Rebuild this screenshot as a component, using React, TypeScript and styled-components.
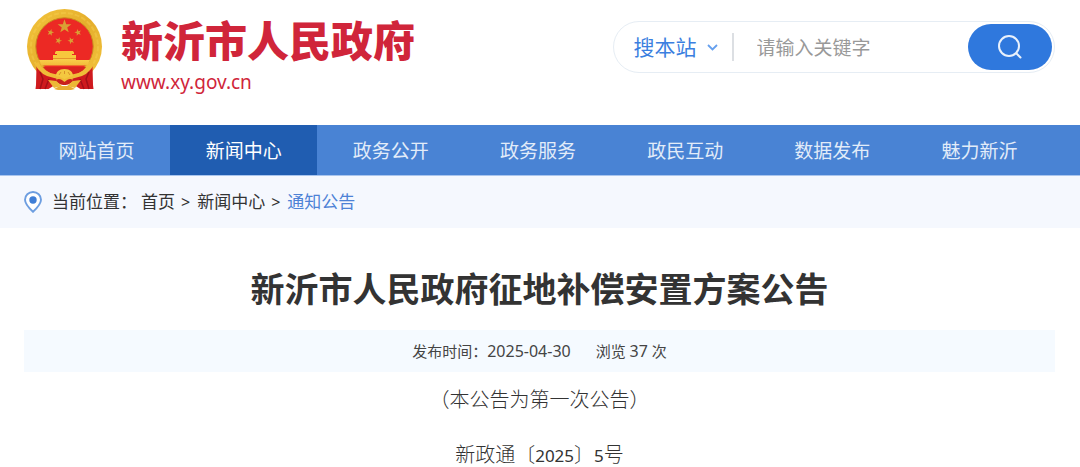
import React from 'react';
import styled, { createGlobalStyle } from 'styled-components';

const GlobalStyle = createGlobalStyle`
  *, *::before, *::after { box-sizing: border-box; }
  body {
    margin: 0;
    background: #fff;
    color: #333;
    font-family: "Noto Sans", "Noto Sans CJK SC", sans-serif;
  }
  button, input, select { font: inherit; }
  h1, p, ul, ol { margin: 0; padding: 0; }
  li { list-style: none; }
  a { color: inherit; text-decoration: none; }
`;

const Header = styled.header`
  display: flex;
  align-items: flex-start;
  justify-content: space-between;
  padding: 9px 25px 34px 26px;
`;

const Brand = styled.a`
  display: flex;
  gap: 18px;
  color: #d0253a;
`;

const BrandText = styled.span`
  display: flex;
  flex-direction: column;
  gap: 8px;
  padding-top: 4px;
`;

const SiteName = styled.strong`
  font-family: "Noto Sans CJK SC", sans-serif;
  font-size: 42px;
  font-weight: 900;
  line-height: 52px;
`;

const SiteUrl = styled.span`
  font-size: 19px;
  line-height: 18px;
`;

const SearchForm = styled.form`
  display: flex;
  align-items: center;
  width: 43%;
  margin-top: 12px;
  padding: 2px 2px 2px 20px;
  border: 1px solid #e6edf4;
  border-radius: 27px;
`;

const ScopeLabel = styled.label`
  display: flex;
  align-items: center;
  gap: 10px;
  padding-right: 14px;
  border-right: 2px solid #dcdfe3;
  color: #3b7fe0;
`;

const ScopeSelect = styled.select`
  appearance: none;
  padding: 0;
  border: 0;
  background: none;
  color: inherit;
  font-size: 21px;
  line-height: 28px;
`;

const KeywordInput = styled.input`
  flex: 1;
  min-width: 0;
  padding: 2px 23px 0;
  border: 0;
  outline: 0;
  background: none;
  font-size: 19px;
  line-height: 28px;
  &::placeholder { color: #999; opacity: 1; }
`;

const SearchButton = styled.button`
  display: flex;
  align-items: center;
  justify-content: center;
  padding: 10px 29px;
  border: 0;
  border-radius: 24px;
  background: #2f78dd;
  color: #e9f1fc;
`;

const Nav = styled.nav`
  padding: 0 27px 0 23px;
  border-bottom: 1px solid #a9c5ee;
  background: #4983d4;
`;

const NavList = styled.ul`
  display: flex;
`;

const NavItem = styled.li`
  flex: 1;
`;

const NavLink = styled.a<{ $active?: boolean }>`
  display: block;
  padding-top: 2px;
  background: ${p => (p.$active ? '#205db1' : 'transparent')};
  color: ${p => (p.$active ? '#fff' : '#e2ecf9')};
  font-size: 19px;
  line-height: 48px;
  text-align: center;
`;

const Breadcrumb = styled.nav`
  display: flex;
  align-items: center;
  padding: 0 24px;
  background: #f5f8fe;
  font-size: 17px;
  line-height: 52px;
`;

const CrumbLabel = styled.span`
  margin: 0 4px 0 10px;
`;

const CrumbList = styled.ol`
  display: flex;
`;

const Crumb = styled.li`
  & + &::before {
    content: ">";
    margin: 0 7px 0 6px;
    font-size: 16px;
  }
`;

const CurrentLink = styled.a`
  color: #4d82d6;
`;

const Article = styled.main`
  padding: 36px 25px 0 24px;
  text-align: center;
`;

const Title = styled.h1`
  font-size: 34px;
  font-weight: 700;
  line-height: 50px;
`;

const Meta = styled.div`
  display: flex;
  justify-content: center;
  gap: 25px;
  margin-top: 16px;
  background: #f5faff;
  color: #444;
  font-size: 15px;
  line-height: 42px;
`;

const Paragraph = styled.p`
  color: #333;
  font-size: 20px;
  font-weight: 300;
  line-height: 55px;
`;

const Figure = styled.span`
  font-size: 16px;
`;

const DocNumber = styled.span`
  font-size: 17px;
  font-weight: 400;
`;

const star = (cx: number, cy: number, r: number, turn = 0) =>
  Array.from({ length: 10 }, (_, i) => {
    const a = ((i * 36 - 90 + turn) * Math.PI) / 180;
    const d = i % 2 ? r * 0.4 : r;
    return `${(cx + d * Math.cos(a)).toFixed(2)},${(cy + d * Math.sin(a)).toFixed(2)}`;
  }).join(' ');

const Emblem = () => (
  <svg width="77" height="82" viewBox="0 0 77 82" aria-hidden="true">
    <defs>
      <linearGradient id="gold" x1="0" y1="0" x2="1" y2="1">
        <stop offset="0" stopColor="#f3c53c" />
        <stop offset=".5" stopColor="#e5ae2c" />
        <stop offset="1" stopColor="#f4c63e" />
      </linearGradient>
      <linearGradient id="terrace" x1="0" y1="0" x2="0" y2="1">
        <stop offset="0" stopColor="#f9d04a" />
        <stop offset="1" stopColor="#f2b93a" />
      </linearGradient>
    </defs>
    <circle cx="38.5" cy="37.5" r="37.5" fill="url(#gold)" />
    <circle cx="38.5" cy="37.5" r="33.5" fill="none" stroke="#f7d253" strokeWidth="2" strokeDasharray="5 2" opacity=".4" />
    <circle cx="38.5" cy="37.5" r="28.7" fill="#ec2924" stroke="#c98a1e" strokeWidth="1" />
    <g fill="#d9a034">
      <polygon points={star(38.5, 17.5, 7.2)} />
      <polygon points={star(24.5, 23.5, 3.6, 15)} />
      <polygon points={star(52, 23.5, 3.6, -15)} />
      <polygon points={star(32.5, 31.7, 3.6, 20)} />
      <polygon points={star(45, 31.7, 3.6, -20)} />
    </g>
    <path d="M29 43.500l1-1.500h17l1 1.500v1.500h-2v1h4v3H27v-3h4v-1h-2z" fill="#f7c83d" />
    <path d="M27 49h23v2H27z" fill="#e5962b" />
    <path d="M13 51h14v-1h23v1h14l-2.500 5.500h-46z" fill="url(#terrace)" />
    <path d="M17 58h43c-4 6-12 9-21.500 9S21 64 17 58z" fill="#d9231f" />
    <path d="M10.500 57c6 7 12 9.500 20 10.500V75l-8 5H9.500l.5-4z" fill="#cf1a1e" />
    <path d="M66.500 57c-6 7-12 9.500-20 10.500V75l8 5h13l-.5-4z" fill="#cf1a1e" />
    <path d="M14 63l3 7-3 10M63 63l-3 7 3 10M23 70l-4 10M54 70l4 10" stroke="#a31018" strokeWidth="1.500" fill="none" />
    <path d="M10.500 54c4 8 11 12 18 13 4 .5 6 2.500 10 2.500s6-2 10-2.500c7-1 14-5 18-13" fill="none" stroke="#efbc38" strokeWidth="4" />
    <path d="M30 67c0-4 3-7 8.500-7s8.500 3 8.500 7l-4 1-4.500 2-4.500-2z" fill="#f4c840" />
    <path d="M33 66l2-3M38.500 65v-3M44 66l-2-3" stroke="#d9912a" strokeWidth="1" />
    <path d="M30 71c3-2 5-1 8.500 2 3.500-3 5.500-4 8.500-2-2 4-5 5-8.500 5S32 75 30 71z" fill="#c9211c" />
    <path d="M22 71l8 1 6 5-8 2zM55 71l-8 1-6 5 8 2z" fill="#ecb836" />
    <path d="M28 80l6-3h9l6 3-4 1H32z" fill="#e8ad32" />
  </svg>
);

const Chevron = () => (
  <svg width="11" height="7" viewBox="0 0 11 7" fill="none" stroke="#66a0ee" strokeWidth="1.8" aria-hidden="true">
    <path d="M1 1l4.500 4.500L10 1" />
  </svg>
);

const SearchIcon = () => (
  <svg width="26" height="26" viewBox="0 0 26 26" fill="none" stroke="currentColor" strokeWidth="2" strokeLinecap="round" aria-hidden="true">
    <circle cx="12" cy="12" r="10" />
    <path d="M19.500 19.500l4 4" />
  </svg>
);

const PinIcon = () => (
  <svg width="18" height="22" viewBox="0 0 18 22" aria-hidden="true">
    <path
      d="M9 1c4.500 0 8 3.400 8 7.800 0 4.300-4.200 8.500-8 12-3.800-3.500-8-7.700-8-12C1 4.400 4.500 1 9 1z"
      fill="#fff"
      stroke="#6d9ee0"
      strokeWidth="1.900"
    />
    <circle cx="9" cy="9" r="3.700" fill="#3f7ed6" />
  </svg>
);

const sections = ['网站首页', '新闻中心', '政务公开', '政务服务', '政民互动', '数据发布', '魅力新沂'];

export default function App() {
  return (
    <>
      <GlobalStyle />
      <Header>
        <Brand href="#">
          <Emblem />
          <BrandText>
            <SiteName>新沂市人民政府</SiteName>
            <SiteUrl>www.xy.gov.cn</SiteUrl>
          </BrandText>
        </Brand>
        <SearchForm role="search" onSubmit={e => e.preventDefault()}>
          <ScopeLabel>
            <ScopeSelect aria-label="搜索范围">
              <option>搜本站</option>
            </ScopeSelect>
            <Chevron />
          </ScopeLabel>
          <KeywordInput type="text" placeholder="请输入关键字" aria-label="关键字" />
          <SearchButton type="submit" aria-label="搜索">
            <SearchIcon />
          </SearchButton>
        </SearchForm>
      </Header>
      <Nav>
        <NavList>
          {sections.map(name => (
            <NavItem key={name}>
              <NavLink href="#" $active={name === '新闻中心'}>{name}</NavLink>
            </NavItem>
          ))}
        </NavList>
      </Nav>
      <Breadcrumb>
        <PinIcon />
        <CrumbLabel>当前位置：</CrumbLabel>
        <CrumbList>
          <Crumb><a href="#">首页</a></Crumb>
          <Crumb><a href="#">新闻中心</a></Crumb>
          <Crumb><CurrentLink href="#" aria-current="page">通知公告</CurrentLink></Crumb>
        </CrumbList>
      </Breadcrumb>
      <Article>
        <Title>新沂市人民政府征地补偿安置方案公告</Title>
        <Meta>
          <span>发布时间：<Figure>2025-04-30</Figure></span>
          <span>浏览 <Figure>37</Figure> 次</span>
        </Meta>
        <Paragraph>（本公告为第一次公告）</Paragraph>
        <Paragraph>新政通〔<DocNumber>2025</DocNumber>〕<DocNumber>5</DocNumber>号</Paragraph>
      </Article>
    </>
  );
}
